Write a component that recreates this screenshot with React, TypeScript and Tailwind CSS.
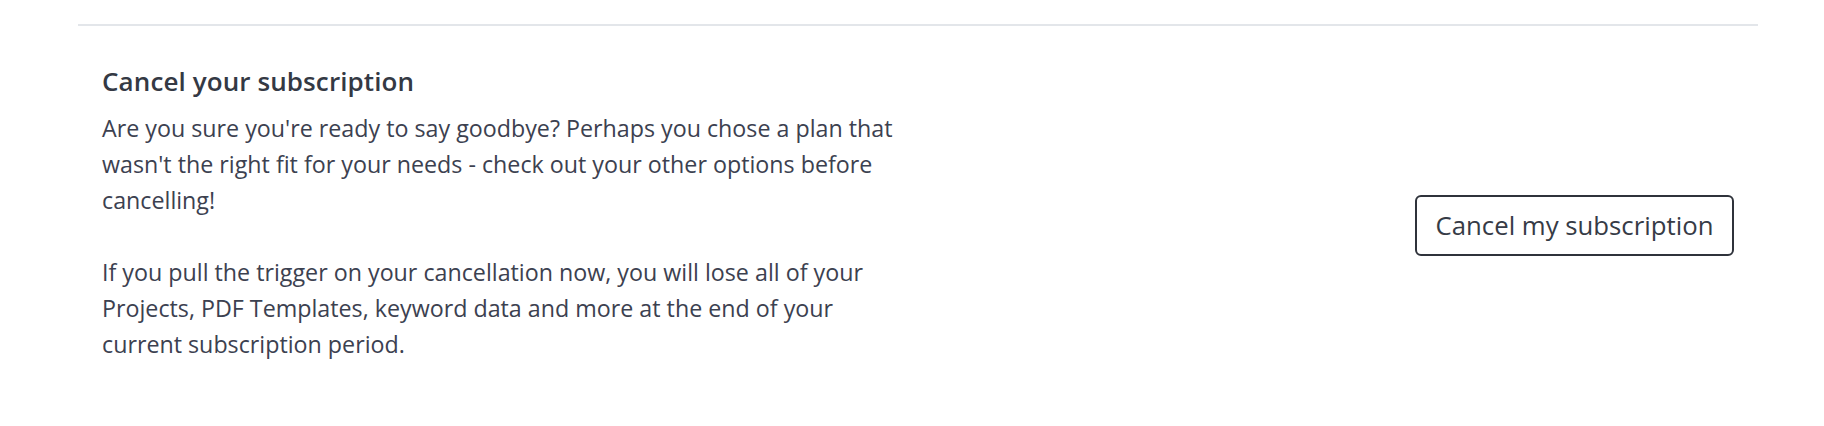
import React from "react";

export default function App() {
  return (
    <div className="w-[1824px] h-[426px] bg-white" style={{ fontFamily: "'Open Sans', Lato, sans-serif" }}>
      <div className="pt-6 pl-[78px] w-[1758px]">
        <div className="border-t-2 border-[#e3e6ea]">
          <div className="flex items-center justify-between px-6">
            <div className="pt-[39px] pb-[63px]">
              <h2 className="text-[26px] leading-[32px] font-semibold tracking-[0.1px] text-[#343944]">Cancel your subscription</h2>
              <div className="mt-[13px] text-[23.25px] leading-[36px] text-[#3c4150]">
                <p>
                  Are you sure you're ready to say goodbye? Perhaps you chose a plan that
                  <br />
                  wasn't the right fit for your needs - check out your other options before
                  <br />
                  cancelling!
                </p>
                <p className="mt-9">
                  If you pull the trigger on your cancellation now, you will lose all of your
                  <br />
                  Projects, PDF Templates, keyword data and more at the end of your
                  <br />
                  current subscription period.
                </p>
              </div>
            </div>
            <button className="h-[61px] w-[319px] rounded-md border-2 border-[#2f333b] text-[25.75px] text-[#363b46] bg-white">
              Cancel my subscription
            </button>
          </div>
        </div>
      </div>
    </div>
  );
}
